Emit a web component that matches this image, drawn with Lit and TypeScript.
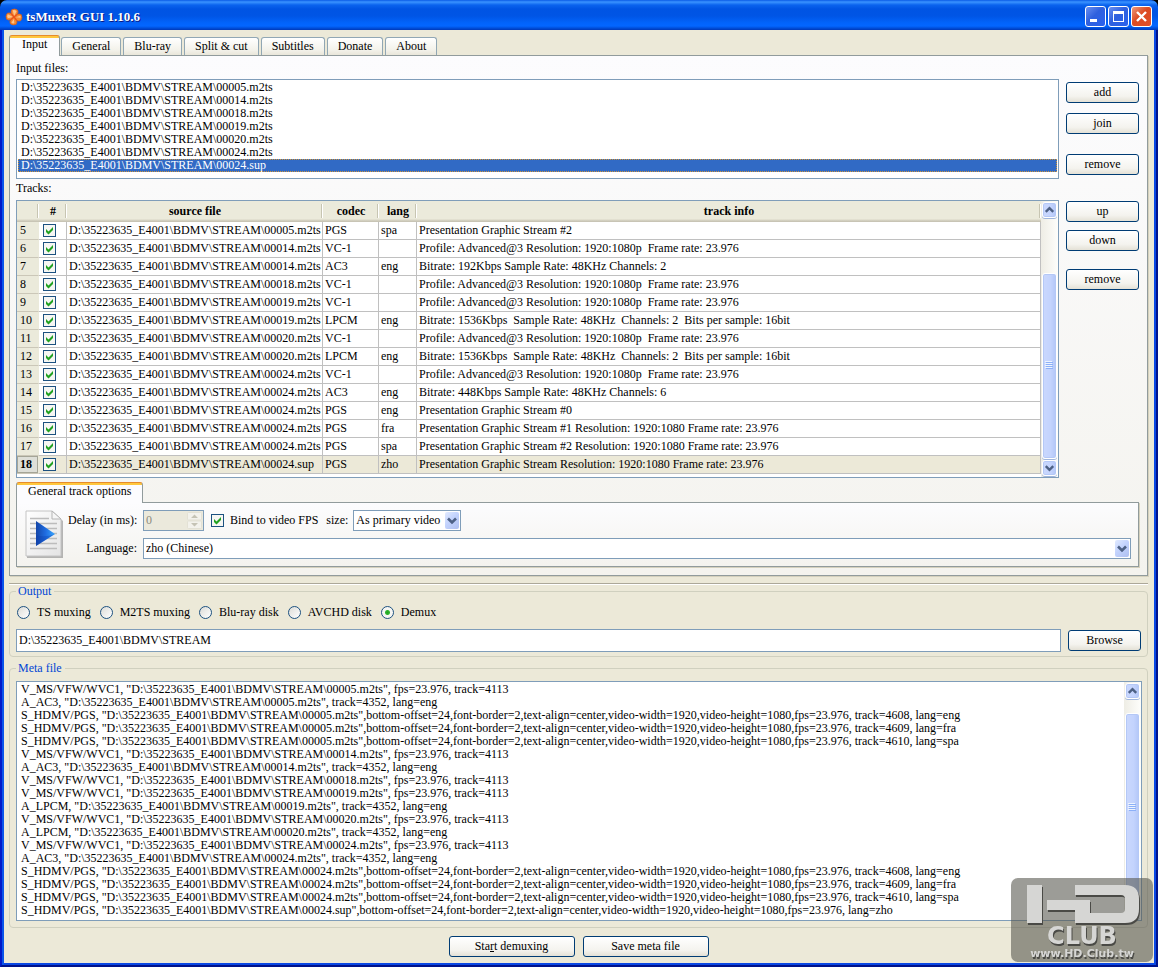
import { LitElement, html, css, svg } from "lit";
import { customElement, property, state } from "lit/decorators.js";

const DIR = "D:\\35223635_E4001\\BDMV\\STREAM";

const FILES = ["00005.m2ts", "00014.m2ts", "00018.m2ts", "00019.m2ts", "00020.m2ts", "00024.m2ts", "00024.sup"];

const VIDEO = "Profile: Advanced@3 Resolution: 1920:1080p  Frame rate: 23.976";
const LPCM = "Bitrate: 1536Kbps  Sample Rate: 48KHz  Channels: 2  Bits per sample: 16bit";

interface Track {
  n: number;
  file: string;
  codec: string;
  lang: string;
  info: string;
}

const TRACKS: Track[] = [
  { n: 5, file: "00005.m2ts", codec: "PGS", lang: "spa", info: "Presentation Graphic Stream #2" },
  { n: 6, file: "00014.m2ts", codec: "VC-1", lang: "", info: VIDEO },
  { n: 7, file: "00014.m2ts", codec: "AC3", lang: "eng", info: "Bitrate: 192Kbps Sample Rate: 48KHz Channels: 2" },
  { n: 8, file: "00018.m2ts", codec: "VC-1", lang: "", info: VIDEO },
  { n: 9, file: "00019.m2ts", codec: "VC-1", lang: "", info: VIDEO },
  { n: 10, file: "00019.m2ts", codec: "LPCM", lang: "eng", info: LPCM },
  { n: 11, file: "00020.m2ts", codec: "VC-1", lang: "", info: VIDEO },
  { n: 12, file: "00020.m2ts", codec: "LPCM", lang: "eng", info: LPCM },
  { n: 13, file: "00024.m2ts", codec: "VC-1", lang: "", info: VIDEO },
  { n: 14, file: "00024.m2ts", codec: "AC3", lang: "eng", info: "Bitrate: 448Kbps Sample Rate: 48KHz Channels: 6" },
  { n: 15, file: "00024.m2ts", codec: "PGS", lang: "eng", info: "Presentation Graphic Stream #0" },
  { n: 16, file: "00024.m2ts", codec: "PGS", lang: "fra", info: "Presentation Graphic Stream #1 Resolution: 1920:1080 Frame rate: 23.976" },
  { n: 17, file: "00024.m2ts", codec: "PGS", lang: "spa", info: "Presentation Graphic Stream #2 Resolution: 1920:1080 Frame rate: 23.976" },
  { n: 18, file: "00024.sup", codec: "PGS", lang: "zho", info: "Presentation Graphic Stream Resolution: 1920:1080 Frame rate: 23.976" },
];

const video = (f: string) => `V_MS/VFW/WVC1, "${DIR}\\${f}", fps=23.976, track=4113`;
const audio = (codec: string, f: string) => `${codec}, "${DIR}\\${f}", track=4352, lang=eng`;
const subs = (f: string, tail: string) =>
  `S_HDMV/PGS, "${DIR}\\${f}",bottom-offset=24,font-border=2,text-align=center,video-width=1920,video-height=1080,fps=23.976, ${tail}`;

const META = [
  video("00005.m2ts"),
  audio("A_AC3", "00005.m2ts"),
  subs("00005.m2ts", "track=4608, lang=eng"),
  subs("00005.m2ts", "track=4609, lang=fra"),
  subs("00005.m2ts", "track=4610, lang=spa"),
  video("00014.m2ts"),
  audio("A_AC3", "00014.m2ts"),
  video("00018.m2ts"),
  video("00019.m2ts"),
  audio("A_LPCM", "00019.m2ts"),
  video("00020.m2ts"),
  audio("A_LPCM", "00020.m2ts"),
  video("00024.m2ts"),
  audio("A_AC3", "00024.m2ts"),
  subs("00024.m2ts", "track=4608, lang=eng"),
  subs("00024.m2ts", "track=4609, lang=fra"),
  subs("00024.m2ts", "track=4610, lang=spa"),
  subs("00024.sup", "lang=zho"),
].join("\n");

const TABS = ["Input", "General", "Blu-ray", "Split & cut", "Subtitles", "Donate", "About"];
const OUTPUTS = ["TS muxing", "M2TS muxing", "Blu-ray disk", "AVCHD disk", "Demux"];

const chevron = (up: boolean) => svg`<path fill="none" stroke="#4d6185" stroke-width="2.6"
  d=${up ? "M3 8.5 L7 4.5 L11 8.5" : "M3 4.5 L7 8.5 L11 4.5"} />`;

/* Vertical Luna scroll bar; the three parts share the track by weight. */
@customElement("luna-scrollbar")
export class LunaScrollbar extends LitElement {
  @property({ type: Number }) before = 0;
  @property({ type: Number }) thumb = 1;
  @property({ type: Number }) after = 0;

  static styles = css`
    :host {
      display: flex;
      flex-direction: column;
      width: 17px;
      box-sizing: border-box;
      padding: 1px;
      background: linear-gradient(to right, #eeede5, #fefefb);
    }
    .arrow,
    .thumb {
      display: grid;
      place-items: center;
      box-sizing: border-box;
      width: 15px;
      padding: 0;
      border: 1px solid #fff;
      border-radius: 3px;
      box-shadow: inset 0 0 0 1px #b4c8f6, 0 1px 0 #9fb5dc;
      background: linear-gradient(to right, #cad8fd, #c3d3fd 60%, #b2c6f7);
    }
    .arrow {
      flex: none;
      height: 16px;
    }
    .arrow svg {
      width: 13px;
      height: 13px;
    }
    .space {
      flex-basis: 0;
    }
    .thumb {
      flex-basis: 0;
      align-content: center;
      gap: 1px;
    }
    .grip {
      width: 7px;
      height: 1px;
      background: #8cb0f8;
      box-shadow: -1px -1px 0 #eef4fe;
    }
  `;

  render() {
    return html`
      <button class="arrow" aria-label="Scroll up"><svg viewBox="0 0 14 14">${chevron(true)}</svg></button>
      <div class="space" style="flex-grow:${this.before}"></div>
      <div class="thumb" style="flex-grow:${this.thumb}">
        <span class="grip"></span><span class="grip"></span><span class="grip"></span><span class="grip"></span>
      </div>
      <div class="space" style="flex-grow:${this.after}"></div>
      <button class="arrow" aria-label="Scroll down"><svg viewBox="0 0 14 14">${chevron(false)}</svg></button>
    `;
  }
}

@customElement("app-root")
export class AppRoot extends LitElement {
  @state() private tab = "Input";
  @state() private output = "Demux";

  static styles = css`
    :host {
      display: flex;
      flex-direction: column;
      position: relative;
      box-sizing: border-box;
      min-height: 100vh;
      background: #000;
      font: 12px/13px "Liberation Serif", serif;
      color: #000;
    }
    button,
    input,
    select,
    textarea {
      font: inherit;
      color: inherit;
      border-radius: 0;
      box-sizing: border-box;
      margin: 0;
    }

    .titlebar {
      display: flex;
      align-items: center;
      height: 30px;
      box-sizing: border-box;
      padding: 3px 6px 0 5px;
      border-radius: 7px 7px 0 0;
      background: linear-gradient(to bottom, #0a5be6 0, #3a93ff 2px, #0a63ee 5px, #0054e3 9px, #0055e5 16px, #0264fb 23px, #0366ff 26px, #0050dc 28px, #0038b8 30px);
    }
    .logo {
      width: 18px;
      height: 18px;
      margin-right: 3px;
    }
    .title {
      flex: 1;
      margin: 0;
      font: bold 13px/18px "Liberation Serif", serif;
      color: #fff;
      text-shadow: 1px 1px 0 #0a1883;
    }
    .window-buttons {
      display: flex;
      gap: 2px;
    }
    .window-button {
      width: 21px;
      height: 21px;
      padding: 0;
      border: 1px solid #fff;
      border-radius: 3px;
      background: linear-gradient(135deg, #6a8ff0, #2f60de 45%, #2a62ee);
    }
    .window-button.close {
      background: linear-gradient(135deg, #ee9a7c, #dc4a22 45%, #e0502a);
    }
    .window-button svg {
      display: block;
      width: 19px;
      height: 19px;
    }

    .frame {
      flex: 1;
      display: flex;
      flex-direction: column;
      padding: 5px 8px 8px 7px;
      border: 2px solid #0019c8;
      border-top: 0;
      border-right-color: #00138c;
      border-bottom-color: #00138c;
      box-shadow: inset 2px 0 0 #0a54ea, inset -2px -2px 0 #0a48e4;
      background: #ece9d8;
    }

    .tabs {
      display: flex;
      align-items: flex-end;
      gap: 2px;
      height: 20px;
    }
    .tab {
      height: 18px;
      padding: 0 10px;
      border: 1px solid #91a7b4;
      border-bottom: 0;
      border-radius: 3px 3px 0 0;
      background: linear-gradient(#fff, #f3f2ea 70%, #e9e6da);
    }
    .tab.active {
      position: relative;
      height: 21px;
      margin: 0 -1px -1px 0;
      padding: 0 12px 3px;
      border-color: #919b9c;
      border-top: 1px solid #e68b2c;
      background: linear-gradient(#ffc73c 2px, #fcfcfe 2px);
    }
    .panel {
      border: 1px solid #919b9c;
      box-shadow: 1px 1px 0 #d5d1bd;
      background: linear-gradient(#fcfcfe, #f4f3ee);
    }
    .main-panel {
      padding: 0 8px 8px 6px;
    }
    .split {
      display: grid;
      grid-template-columns: minmax(0, 1fr) 73px;
      column-gap: 7px;
      row-gap: 3px;
    }
    .caption {
      display: block;
      height: 13px;
      margin: 6px 0 4px;
    }
    .caption.tracks {
      margin: 0 0 5px;
    }
    .side {
      display: flex;
      flex-direction: column;
      gap: 10px;
      padding-top: 26px;
    }
    .side.tracks {
      gap: 8px;
      padding-top: 19px;
    }
    .side .apart {
      margin-top: 10px;
    }
    .push {
      height: 21px;
      padding: 0 4px;
      border: 1px solid #003c74;
      border-radius: 3px;
      background: linear-gradient(#fff, #f4f3ee 70%, #e4e1d6);
    }

    .files {
      height: 100px;
      box-sizing: border-box;
      margin: 0;
      padding: 1px;
      border: 1px solid #7f9db9;
      background: #fff;
      list-style: none;
    }
    .file {
      padding-left: 3px;
    }
    .file.selected {
      background: #316ac5;
      color: #fff;
      outline: 1px dotted #ce953a;
      outline-offset: -1px;
    }

    .grid-box {
      display: flex;
      height: 278px;
      box-sizing: border-box;
      border: 1px solid #7f9db9;
      background: #fff;
    }
    .grid-view {
      flex: 1;
      min-width: 0;
    }
    .grid {
      width: 100%;
      table-layout: fixed;
      border-collapse: separate;
      border-spacing: 0;
    }
    .c-num { width: 22px; }
    .c-check { width: 28px; }
    .c-file { width: 256px; }
    .c-codec { width: 56px; }
    .c-lang { width: 38px; }
    .grid th,
    .grid td {
      height: 17px;
      padding: 0 0 0 2px;
      border-right: 1px solid #c0c0c0;
      border-bottom: 1px solid #c0c0c0;
      text-align: left;
      white-space: pre;
      font-weight: normal;
      overflow: hidden;
    }
    .grid thead th {
      height: 21px;
      padding: 0;
      border-right: 0;
      border-bottom: 0;
      text-align: center;
      font-weight: bold;
      background:
        linear-gradient(#c7c5b2, #c7c5b2) right 1px top 3px / 1px 14px no-repeat,
        linear-gradient(#fff, #fff) right 0 top 3px / 1px 14px no-repeat,
        linear-gradient(#ebeadb 0, #ebeadb 18px, #d8d5c5 19px, #c3bfb0 21px);
    }
    .grid tbody th {
      padding: 0 0 0 3px;
      border-right-color: #ebeadb;
      border-bottom-color: #cbc7b8;
      background: #ebeadb;
    }
    .grid .current td {
      background: #ece9d8;
    }
    .grid .current th {
      font-weight: bold;
      background: #dedfd8;
      box-shadow: inset 0 0 0 1px #a5a597;
    }
    .grid input {
      display: block;
      margin-left: 2px;
    }

    .check {
      appearance: none;
      flex: none;
      width: 13px;
      height: 13px;
      border: 1px solid #1c5180;
      background: #f6f6f3;
    }
    .check:checked {
      background: #f6f6f3
        url("data:image/svg+xml,%3Csvg xmlns='http://www.w3.org/2000/svg' viewBox='0 0 11 11'%3E%3Cpath d='M2 4 L4.5 6.500 L9 2 V5 L4.5 9.500 L2 7z' fill='%2321a121'/%3E%3C/svg%3E")
        center / 11px 11px no-repeat;
    }
    .radio {
      appearance: none;
      flex: none;
      width: 13px;
      height: 13px;
      border: 1px solid #1c5180;
      border-radius: 50%;
      background: linear-gradient(135deg, #dcdcd7, #fff);
    }
    .radio:checked {
      background: radial-gradient(circle, #21a121 0, #2fb52f 2px, #f6f6f3 3px);
    }

    .sub-tabs {
      margin-top: 4px;
    }
    .sub-tabs .tab {
      padding: 0 11px 3px;
    }
    .sub-panel {
      display: grid;
      grid-template-columns: 37px 69px minmax(0, 1fr);
      column-gap: 6px;
      row-gap: 7px;
      align-items: center;
      padding: 7px 7px 7px 8px;
    }
    .sheet {
      grid-row: span 2;
      width: 39px;
      height: 49px;
    }
    .field-label {
      text-align: right;
      white-space: nowrap;
    }
    .options {
      display: flex;
      align-items: center;
    }
    .spin {
      display: flex;
      width: 61px;
      height: 21px;
      box-sizing: border-box;
      margin-right: 7px;
      border: 1px solid #7f9db9;
      background: #ebe9dc;
    }
    .spin input {
      appearance: textfield;
      flex: 1;
      min-width: 0;
      padding: 0 0 0 2px;
      border: 0;
      background: none;
      color: #8d8b7c;
    }
    .spin svg {
      width: 15px;
      height: 17px;
      margin: 1px;
    }
    .bind {
      margin: 0 8px 0 6px;
    }
    .combo {
      position: relative;
      display: flex;
      height: 21px;
    }
    .combo.size {
      width: 108px;
      margin-left: 5px;
    }
    .combo select {
      appearance: none;
      width: 100%;
      padding: 0 18px 0 2px;
      border: 1px solid #7f9db9;
      background: #fff;
    }
    .combo svg {
      position: absolute;
      top: 2px;
      right: 2px;
      width: 14px;
      height: 17px;
      border-radius: 2px;
      background: linear-gradient(135deg, #e1eafe, #c3d3fd 45%, #aebff0);
      pointer-events: none;
    }

    .splitter {
      height: 1px;
      margin: 7px 0 0;
      border-top: 1px solid #aca899;
      background: #fff;
    }
    .group {
      min-width: 0;
      margin: 0 0 5px;
      padding: 5px 6px 4px 6px;
      border: 1px solid #d0d0bf;
      border-radius: 4px;
    }
    .group legend {
      height: 12px;
      padding: 0 3px 0 2px;
      line-height: 12px;
      color: #0046d5;
    }
    .radios {
      display: flex;
      align-items: center;
      gap: 9px;
      height: 20px;
      margin: 0 0 7px 1px;
    }
    .radio-item {
      display: flex;
      align-items: center;
      gap: 7px;
    }
    .path-row {
      display: flex;
      align-items: center;
      gap: 7px;
    }
    .path {
      flex: 1;
      min-width: 0;
      height: 23px;
      padding: 0 2px;
      border: 1px solid #7f9db9;
      background: #fff;
    }
    .browse {
      width: 73px;
    }
    .meta {
      flex: 1;
      display: flex;
      margin-bottom: 8px;
      padding: 7px 5px 4px 6px;
    }
    .meta-box {
      flex: 1;
      display: flex;
      min-width: 0;
      border: 1px solid #7f9db9;
      background: #fff;
    }
    .meta-box textarea {
      flex: 1;
      min-width: 0;
      min-height: 238px;
      padding: 1px 4px;
      border: 0;
      outline: 0;
      background: none;
      resize: none;
      white-space: pre;
      overflow: hidden;
    }
    .actions {
      display: flex;
      justify-content: center;
      gap: 8px;
    }
    .actions .push {
      width: 126px;
    }
    .watermark {
      position: absolute;
      right: 5px;
      bottom: 5px;
      width: 142px;
      height: 84px;
      pointer-events: none;
    }
    .wm-ink {
      fill: #d6d6d4;
      filter: drop-shadow(1px 2px 0 #4a4a46);
    }
    .wm-club {
      font: bold 24px "DejaVu Sans", sans-serif;
    }
    .wm-url {
      font: bold 11px "DejaVu Sans", sans-serif;
    }
  `;

  private renderTrack(t: Track) {
    return html`
      <tr class=${t.n === 18 ? "current" : ""}>
        <th scope="row">${t.n}</th>
        <td><input class="check" type="checkbox" checked aria-label="Use track ${t.n}" /></td>
        <td>${DIR}\\${t.file}</td>
        <td>${t.codec}</td>
        <td>${t.lang}</td>
        <td>${t.info}</td>
      </tr>
    `;
  }

  private renderTitlebar() {
    return html`
      <header class="titlebar">
        <svg class="logo" viewBox="0 0 18 18" aria-hidden="true">
          <g transform="rotate(6 9 9)">
            <path
              d="M6 2 Q9 0 12 2 Q13 4 12 6 Q14 5 16 6 Q18 9 16 12 Q14 13 12 12 Q13 14 12 16 Q9 18 6 16 Q5 14 6 12 Q4 13 2 12 Q0 9 2 6 Q4 5 6 6 Q5 4 6 2z"
              fill="#f58a32" stroke="#d9601a" stroke-width=".8" />
            <path d="M7 2.500 Q9 1.500 11 3 L9 8z M2.500 7 Q1.500 9 3 11 L8 9z M7 15 Q9 16 10 15 L9 11z M15 7 Q16 8 15.500 9 L11 9z" fill="#ffc48a" />
            <path d="M6 6 L12 12 M12 6 L6 12" stroke="#e8501c" stroke-width="1.300" />
          </g>
        </svg>
        <h1 class="title">tsMuxeR GUI 1.10.6</h1>
        <div class="window-buttons">
          <button class="window-button" aria-label="Minimize">
            <svg viewBox="0 0 19 19"><rect x="4" y="12" width="7" height="3" fill="#fff" /></svg>
          </button>
          <button class="window-button" aria-label="Maximize">
            <svg viewBox="0 0 19 19"><path d="M4 4 H15 V15 H4z M5 7 V14 H14 V7z" fill="#fff" fill-rule="evenodd" /></svg>
          </button>
          <button class="window-button close" aria-label="Close">
            <svg viewBox="0 0 19 19"><path d="M5 5 L14 14 M14 5 L5 14" stroke="#fff" stroke-width="2.4" /></svg>
          </button>
        </div>
      </header>
    `;
  }

  private renderInputPanel() {
    return html`
      <section class="panel main-panel">
        <div class="split">
          <div>
            <span class="caption" id="files-label">Input files:</span>
            <ul class="files" role="listbox" aria-labelledby="files-label">
              ${FILES.map(
                (f, i) => html`<li class="file ${i === 6 ? "selected" : ""}" role="option" aria-selected=${i === 6}>${DIR}\\${f}</li>`
              )}
            </ul>
          </div>
          <div class="side">
            <button class="push">add</button>
            <button class="push">join</button>
            <button class="push apart">remove</button>
          </div>
          <div>
            <span class="caption tracks" id="tracks-label">Tracks:</span>
            <div class="grid-box">
              <div class="grid-view">
                <table class="grid" aria-labelledby="tracks-label">
                  <colgroup>
                    <col class="c-num" /><col class="c-check" /><col class="c-file" />
                    <col class="c-codec" /><col class="c-lang" /><col />
                  </colgroup>
                  <thead>
                    <tr><th></th><th>#</th><th>source file</th><th>codec</th><th>lang</th><th>track info</th></tr>
                  </thead>
                  <tbody>${TRACKS.map((t) => this.renderTrack(t))}</tbody>
                </table>
              </div>
              <luna-scrollbar .before=${55} .thumb=${186} .after=${1}></luna-scrollbar>
            </div>
          </div>
          <div class="side tracks">
            <button class="push">up</button>
            <button class="push">down</button>
            <button class="push apart">remove</button>
          </div>
        </div>
        <div class="tabs sub-tabs"><button class="tab active">General track options</button></div>
        <div class="panel sub-panel">
          <svg class="sheet" viewBox="0 0 39 49" aria-hidden="true">
            <defs>
              <linearGradient id="paper" x1="0" y1="0" x2="1" y2="1">
                <stop offset="0" stop-color="#fff" /><stop offset="1" stop-color="#e4e4e4" />
              </linearGradient>
              <linearGradient id="play" x1="0" y1="0" x2="1" y2="0">
                <stop offset="0" stop-color="#1546a8" /><stop offset="0.5" stop-color="#1f6ce0" /><stop offset="1" stop-color="#3aa8ff" />
              </linearGradient>
            </defs>
            <path d="M2 3 H29 L38 11 V48 H2z" fill="#888" opacity=".6" />
            <path d="M1 1 H27 L36 9 V46 H1z" fill="url(#paper)" stroke="#c4c4c4" />
            <path d="M5 8.500H24M5 13.500H32M5 18.500H32M5 23.500H32M5 28.500H32M5 33.500H32M5 38.500H32" stroke="#bcbcbc" stroke-width="1.500" />
            <path d="M27 1 V9 H36z" fill="#f6f6f6" stroke="#b4b4b4" />
            <path d="M11 11 L30 24 L11 36z" fill="url(#play)" />
            <path d="M11 25 Q20 28 30 24 L11 36z" fill="#0c3fae" opacity=".35" />
          </svg>
          <label class="field-label" for="delay">Delay (in ms):</label>
          <div class="options">
            <div class="spin">
              <input id="delay" type="number" value="0" disabled />
              <svg viewBox="0 0 15 17" aria-hidden="true">
                <rect x=".5" y=".5" width="14" height="7.5" rx="1" fill="#f3f2ec" stroke="#e3e1d5" />
                <rect x=".5" y="9" width="14" height="7.5" rx="1" fill="#f3f2ec" stroke="#e3e1d5" />
                <path d="M4 6 L7.5 2.5 L11 6z M4 11 L7.5 14.5 L11 11z" fill="#c5c3b5" />
              </svg>
            </div>
            <input class="check" id="bind" type="checkbox" checked />
            <label class="bind" for="bind">Bind to video FPS</label>
            <label for="size">size:</label>
            <div class="combo size">
              <select id="size"><option>As primary video</option></select>
              <svg viewBox="0 0 14 17" aria-hidden="true"><g transform="translate(0 2)">${chevron(false)}</g></svg>
            </div>
          </div>
          <label class="field-label" for="language">Language:</label>
          <div class="combo">
            <select id="language"><option>zho (Chinese)</option></select>
            <svg viewBox="0 0 14 17" aria-hidden="true"><g transform="translate(0 2)">${chevron(false)}</g></svg>
          </div>
        </div>
      </section>
    `;
  }

  private renderWatermark() {
    return html`
      <svg class="watermark" viewBox="0 0 142 84" role="img" aria-label="HD Club">
        <rect width="142" height="84" rx="7" fill="#55544c" fill-opacity=".58" />
        <g class="wm-ink">
          <path d="M16 7 H31 V45 H16z" />
          <path d="M36 22 H79 V35 H110 Q114 35 114 31 V21 Q114 17 110 17 H64 V7 H114 Q128 7 128 21 V31 Q128 45 114 45 H64 V32 H36z" />
          <text class="wm-club" x="71" y="66" text-anchor="middle">CLUB</text>
          <text class="wm-url" x="71" y="79" text-anchor="middle">www.HD.Club.tw</text>
        </g>
      </svg>
    `;
  }

  render() {
    return html`
      ${this.renderTitlebar()}
      <main class="frame">
        <nav class="tabs">
          ${TABS.map(
            (t) => html`<button class="tab ${t === this.tab ? "active" : ""}" @click=${() => (this.tab = t)}>${t}</button>`
          )}
        </nav>
        ${this.renderInputPanel()}
        <div class="splitter"></div>
        <fieldset class="group">
          <legend>Output</legend>
          <div class="radios">
            ${OUTPUTS.map(
              (o) => html`<label class="radio-item">
                <input class="radio" type="radio" name="output" .checked=${o === this.output} @change=${() => (this.output = o)} />${o}
              </label>`
            )}
          </div>
          <div class="path-row">
            <input class="path" type="text" aria-label="Output folder" .value=${DIR} />
            <button class="push browse">Browse</button>
          </div>
        </fieldset>
        <fieldset class="group meta">
          <legend>Meta file</legend>
          <div class="meta-box">
            <textarea aria-label="Meta file" readonly wrap="off" spellcheck="false" .value=${META}></textarea>
            <luna-scrollbar .before=${14} .thumb=${190} .after=${1}></luna-scrollbar>
          </div>
        </fieldset>
        <div class="actions">
          <button class="push">Sta<u>r</u>t demuxing</button>
          <button class="push">Save meta file</button>
        </div>
      </main>
      ${this.renderWatermark()}
    `;
  }
}
